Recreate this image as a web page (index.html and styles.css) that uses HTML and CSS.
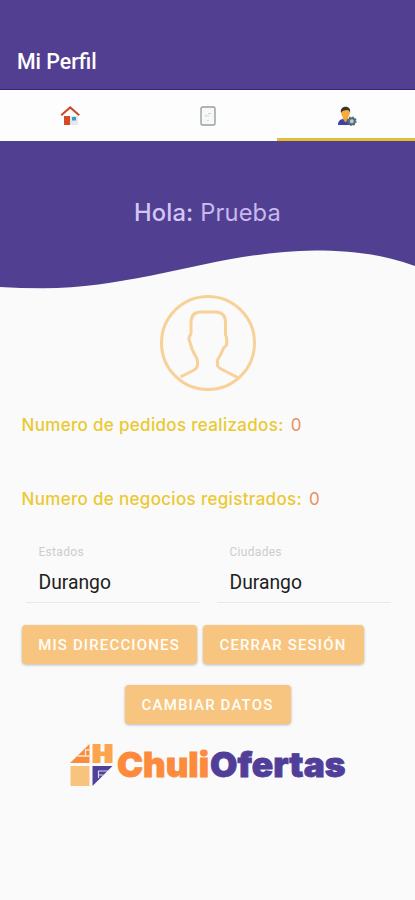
FILE: index.html
```
<!DOCTYPE html>
<html lang="es">
<head>
<meta charset="utf-8">
<meta name="viewport" content="width=device-width">
<title>Mi Perfil</title>
<link rel="stylesheet" href="styles.css">
</head>
<body>
<header class="appbar"><h1>Mi Perfil</h1></header>
<nav class="tabs">
  <a class="tab">
    <svg width="20" height="20" viewBox="0 0 20 20"><path d="M4 10h14v9H4z" fill="#e4e8ea"/><path d="M4 10h6v9H4z" fill="#d44a22"/><path d="M12 11h4v3.5h-4z" fill="#2d9fd5"/><path d="M1.2 9.2 10.2 1.4l9 7.8" fill="none" stroke="#cc4827" stroke-width="2"/></svg>
  </a>
  <a class="tab">
    <svg width="20" height="20" viewBox="0 0 20 20"><rect x="3" y="1" width="14" height="18" rx="1.6" fill="#f7f8f8" stroke="#999d9f" stroke-width="1.4"/><path d="M7 9.5 8 8.500M10 7.500h3M7 10h4M9 15l2-1" fill="none" stroke="#d0d3d4"/></svg>
  </a>
  <a class="tab active">
    <svg width="20" height="20" viewBox="0 0 20 20"><path d="M1 19c0-4 2-5.500 5-6h5c2 .5 3 2 3 6z" fill="#4040aa"/><path d="m5.500 12.500 3 4 3-4-1-2h-4z" fill="#f0a12e"/><ellipse cx="8.500" cy="7.300" rx="4.200" ry="5" fill="#f5ac38"/><path d="M4 7C3 2.500 6 .8 8.800.8S14 3 13 7L12 4.500 9.500 4 5.500 5z" fill="#3b3431"/><circle cx="14.800" cy="15.200" r="3" fill="#b5cbd2" stroke="#536d79" stroke-width="2"/><circle cx="14.800" cy="15.200" r="4.200" fill="none" stroke="#536d79" stroke-width="1.300" stroke-dasharray="1.650 1.650"/></svg>
  </a>
</nav>
<section class="hero">
  <p class="hello"><span>Hola:</span> Prueba</p>
  <svg class="wave" width="415" height="42" viewBox="0 0 415 42" preserveAspectRatio="none"><path d="M0 0H415V18C382 6 350 2.500 315 2.500C220 3 140 40.300 43 40.300Q20 40.300 0 39Z"/></svg>
</section>
<main>
  <svg class="avatar" width="96" height="96" viewBox="0 0 96 96"><circle cx="48" cy="48" r="46.500"/><path d="M20.500 82 34 75Q37.500 73 37.500 70V66Q37.500 64 35 60Q31.500 54 30.800 50L29 44.500Q28.500 42 31 39V27Q31.300 17 41 17H56Q65.500 17.500 65.500 27V40Q67.500 43 66.500 50L63.500 53 61.500 58 57.500 65V70.500Q58 72.500 62 74.500L77.500 82.500"/></svg>
  <p class="stat first"><span>Numero de pedidos realizados:</span><b>0</b></p>
  <p class="stat second"><span>Numero de negocios registrados:</span><b>0</b></p>
  <div class="fields">
    <div class="field"><label>Estados</label><div>Durango</div></div>
    <div class="field"><label>Ciudades</label><div>Durango</div></div>
  </div>
  <div class="actions">
    <button class="directions">MIS DIRECCIONES</button>
    <button class="logout">CERRAR SESIÓN</button>
  </div>
  <button class="change">CAMBIAR DATOS</button>
  <svg class="logo" width="278" height="44" viewBox="0 0 278 44">
    <path d="M1 20 20.500 1V20z" fill="#f98d3d"/>
    <path d="M23.500 1H31.500V8.500H35.500V1H43.500V20H35.500V13H31.500V20H23.500z" fill="#fba64f"/>
    <path d="M1.500 23H20.500V43H1.500z" fill="#f8c47d"/>
    <path d="M23.500 23H43.500L23.500 43z" fill="#51409a"/>
    <path d="M20.500 7H16.500V13H8.500M16 13H20.500" fill="none" stroke="#fde5d2" stroke-width="1.300"/>
    <path d="M39 28H29.500V35M30 32H34.500" fill="none" stroke="#d9d3e8" stroke-width="1.200"/>
    <g class="wordmark"><text x="48" y="34" textLength="92" lengthAdjust="spacingAndGlyphs" fill="#fc8b3c" stroke="#fc8b3c">Chuli</text><text x="141" y="34" textLength="135.500" lengthAdjust="spacingAndGlyphs" fill="#503e98" stroke="#503e98">Ofertas</text></g>
  </svg>
</main>
</body>
</html>
```
FILE: styles.css
```
* { box-sizing: border-box; }
body { margin: 0; height: 900px; overflow: hidden; background: #fafafa; font-family: Roboto, sans-serif; }
p, h1 { margin: 0; }
.appbar { height: 90px; padding: 49px 17px 0; background: #523f92; border-bottom: 1px solid #35277c; color: #fff; }
h1 { font-size: 21.300px; line-height: 26px; font-weight: 500; letter-spacing: 0; }
.tabs { display: grid; grid-template-columns: repeat(3, 1fr); height: 51px; background: #fcfdfc; }
.tab { display: flex; align-items: center; justify-content: center; padding: 3px 0 0 1px; border-bottom: 3px solid transparent; }
.active { padding-left: 2px; border-color: #e5bd35; }
.hero { height: 149px; background: linear-gradient(#513f91 0 107px, #fafafa 107px); }
.hello { height: 107px; padding-top: 54px; text-align: center; color: #c9b8ee; font: 23.700px/36px Inter, sans-serif; letter-spacing: .15px; }
.hello span { font-weight: 500; color: #d4c6f5; }
.wave { display: block; fill: #513f91; }
main { display: flex; flex-direction: column; align-items: center; }
.avatar { margin-top: 5px; fill: none; stroke: #f8d199; stroke-width: 3; stroke-linejoin: round; }
.stat { align-self: stretch; display: flex; height: 26px; padding-left: 21.500px; font: 500 17px/26px Inter, sans-serif; letter-spacing: .32px; color: #eac932; }
.stat b { margin-left: 7px; font-weight: 400; color: #e9905f; }
.first { margin-top: 21px; }
.second { margin-top: 48px; }
.fields { display: flex; gap: 17px; align-self: stretch; padding-left: 25.500px; margin-top: 32px; }
.field { width: 174px; height: 59px; padding-left: 13px; border-bottom: 1px solid #e9e9e9; }
.field label { display: block; font: 12px/16px Roboto, sans-serif; letter-spacing: .3px; color: #cdcdcd; }
.field div { margin-top: 10px; font-size: 19.300px; line-height: 26px; color: #202020; }
.actions { display: flex; gap: 6px; align-self: stretch; padding-left: 21.500px; margin-top: 22px; }
button { height: 39px; padding: 1px 0 0; border: 0; border-radius: 4px; background: #f8c580; color: #fffdf7; font: 500 15px/38px Roboto, sans-serif; letter-spacing: 1.150px; box-shadow: 0 1px 3px #0004; }
.directions { width: 175px; }
.logout { width: 161px; }
.change { width: 166px; margin-top: 21px; }
.logo { margin-top: 19px; }
.wordmark { font: 900 34px Inter, sans-serif; stroke-width: .8px; }
```
